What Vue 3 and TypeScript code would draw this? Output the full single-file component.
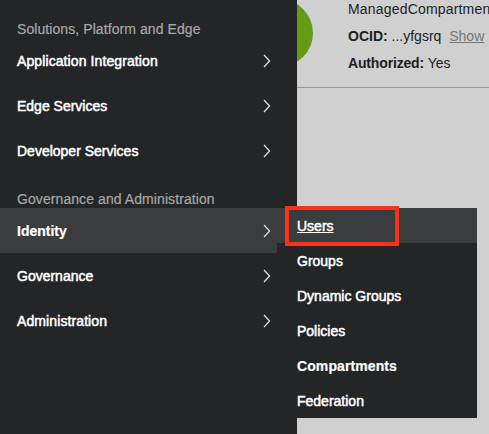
<script setup lang="ts">
interface MenuItem {
  label: string
  active?: boolean
  bold?: boolean
  wide?: boolean
}

interface MenuSection {
  title: string
  items: MenuItem[]
}

const sections: MenuSection[] = [
  {
    title: 'Solutions, Platform and Edge',
    items: [
      { label: 'Application Integration', wide: true },
      { label: 'Edge Services' },
      { label: 'Developer Services' },
    ],
  },
  {
    title: 'Governance and Administration',
    items: [
      { label: 'Identity', active: true, bold: true },
      { label: 'Governance' },
      { label: 'Administration', wide: true },
    ],
  },
]

const submenu: MenuItem[] = [
  { label: 'Users', active: true },
  { label: 'Groups' },
  { label: 'Dynamic Groups' },
  { label: 'Policies' },
  { label: 'Compartments', bold: true, wide: true },
  { label: 'Federation' },
]
</script>

<template>
  <div class="screen">
    <nav class="nav">
      <section v-for="section in sections" :key="section.title" class="section">
        <h2 class="title">{{ section.title }}</h2>
        <a
          v-for="item in section.items"
          :key="item.label"
          class="row"
          :class="{ active: item.active, bold: item.bold, wide: item.wide }"
        >
          <span>{{ item.label }}</span>
          <svg class="chevron" width="8" height="14" viewBox="0 0 8 14">
            <path d="M1 1 L6.6 7 L1 13" />
          </svg>
        </a>
      </section>
    </nav>

    <main class="page">
      <div class="summary">
        <div class="details">
          <div class="name">ManagedCompartmen</div>
          <div><b>OCID:</b> ...yfgsrq <a class="show">Show</a></div>
          <div><b class="tight">Authorized:</b> Yes</div>
        </div>
      </div>
      <div class="badge"></div>
    </main>

    <div class="submenu">
      <a
        v-for="item in submenu"
        :key="item.label"
        class="subrow"
        :class="{ active: item.active, bold: item.bold, wide: item.wide }"
      >{{ item.label }}</a>
    </div>
    <div class="highlight"></div>
  </div>
</template>

<style>
body {
  margin: 0;
  overflow: hidden;
}
</style>

<style scoped>
.screen {
  position: relative;
  display: flex;
  width: 489px;
  height: 434px;
  overflow: hidden;
  background: #d0d0d0;
  font-family: "Liberation Sans", Arial, sans-serif;
  font-size: 14px;
}
.nav {
  position: relative;
  z-index: 1;
  flex: none;
  box-sizing: border-box;
  width: 297px;
  padding-top: 20px;
  background: #242527;
}
.section + .section {
  margin-top: 17px;
}
.title {
  margin: 0;
  padding-left: 17px;
  height: 18px;
  line-height: 18px;
  font-size: 14px;
  font-weight: 400;
  letter-spacing: 0.08px;
  color: #a7a8a8;
  -webkit-text-stroke: 0.2px #a7a8a8;
}
.row {
  display: flex;
  align-items: center;
  justify-content: space-between;
  box-sizing: border-box;
  width: 277px;
  height: 45px;
  padding: 0 6px 0 17px;
  line-height: 18px;
  color: #fff;
  -webkit-text-stroke: 0.5px #fff;
}
.active {
  background: #3b3c3d;
}
.bold {
  font-weight: 700;
  -webkit-text-stroke: 0.2px #fff;
}
.wide {
  letter-spacing: 0.1px;
}
.chevron path {
  fill: none;
  stroke: #e6e6e6;
  stroke-width: 1.2;
}
.page {
  position: relative;
  flex: 1;
  min-width: 0;
}
.summary {
  box-sizing: border-box;
  height: 88px;
  padding-left: 51px;
  border-bottom: 1px solid #999;
  overflow: hidden;
}
.details {
  margin-top: -4px;
  line-height: 27px;
  white-space: nowrap;
  color: #1d1e20;
}
.name {
  letter-spacing: 0.18px;
}
.tight {
  letter-spacing: -0.16px;
}
.show {
  margin-left: 4px;
  color: #777;
  text-decoration: underline;
}
.badge {
  position: absolute;
  left: -52px;
  top: -1px;
  width: 68px;
  height: 68px;
  border-radius: 50%;
  background: #669b17;
}
.submenu {
  position: absolute;
  z-index: 2;
  left: 277px;
  top: 208px;
  width: 200px;
  background: #242527;
}
.subrow {
  display: block;
  box-sizing: border-box;
  height: 35px;
  padding: 1px 0 0 20px;
  line-height: 35px;
  color: #fff;
  -webkit-text-stroke: 0.5px #fff;
}
.subrow.active {
  text-decoration: underline;
  text-decoration-thickness: 1px;
  text-underline-offset: 1px;
}
.subrow.bold {
  -webkit-text-stroke: 0.2px #fff;
}
.highlight {
  position: absolute;
  z-index: 3;
  left: 285px;
  top: 206px;
  box-sizing: border-box;
  width: 114px;
  height: 40px;
  border: 4px solid #fc301b;
}
</style>
